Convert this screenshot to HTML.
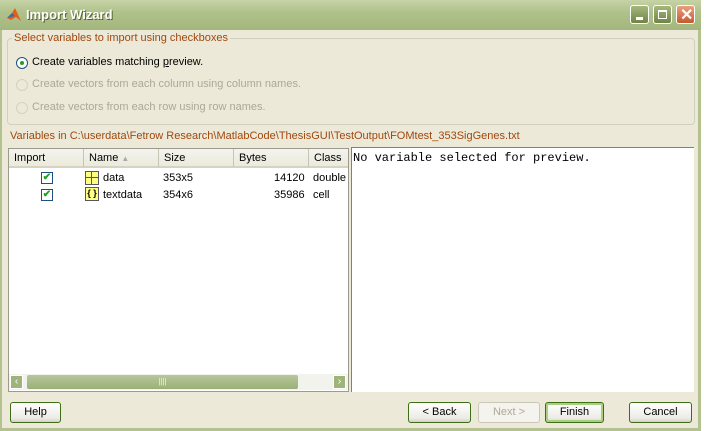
<html><head><style>
body{margin:0;width:704px;height:431px;overflow:hidden;background:#fff;font-family:"Liberation Sans",sans-serif;font-size:11px;position:relative}
.win{position:absolute;left:0;top:0;width:701px;height:431px;background:#ece9d8;border-right:3px solid #b3c28e;border-left:2px solid #b3c28e;border-bottom:3px solid #b3c28e;box-sizing:border-box}
.tb{position:absolute;left:-2px;top:0;width:701px;height:30px;background:linear-gradient(#c6d3a6,#b0c28b 40%,#a3b67d);}
.tb .t{position:absolute;left:26px;top:7px;color:#fff;font-weight:bold;font-size:13px;text-shadow:1px 1px #55622f}
.bt{position:absolute;top:5px;width:19px;height:19px;border:1px solid #fff;border-radius:3px;box-sizing:border-box;background:linear-gradient(#a6b77c,#6f8446)}
.a{position:absolute;white-space:nowrap}
.grp{position:absolute;left:5px;top:38px;width:688px;height:87px;border:1px solid #d0d0bf;border-radius:4px;box-sizing:border-box}
.rad{position:absolute;width:12px;height:12px;border-radius:50%;border:1px solid #d4d2c4;box-sizing:border-box}
.dis{color:#aca899}
.btn{position:absolute;top:402px;height:21px;border:1px solid #3e6e16;border-radius:3px;box-sizing:border-box;background:linear-gradient(#fff,#ecebe6 80%,#d6d0c5);text-align:center;line-height:19px;font-size:11px}
.hd{position:absolute;top:149px;height:19px;background:linear-gradient(#f4f3ee,#ebeadb);border-right:1px solid #c7c5b2;border-bottom:2px solid #d6d3c2;box-sizing:border-box;line-height:18px;padding-left:5px}
.cb{position:absolute;left:39px;width:12px;height:12px;border:1px solid #1c5180;box-sizing:border-box;background:#fff;color:#21a121;font-size:10px;line-height:10px;text-align:center;font-weight:bold}
</style></head><body>
<div class="win">
<div class="tb"><svg style="position:absolute;left:6px;top:7px" width="16" height="16"><path d="M1 11 L6 6 L9 1 L15 14 L10 10 L5 13Z" fill="#e0601a"/><path d="M1 11 L6 6 L9 9 Z" fill="#3a6ab0"/></svg><div class="t">Import Wizard</div>
<div class="bt" style="left:630px"><div style="position:absolute;left:5px;top:11px;width:7px;height:3px;background:#fff"></div></div>
<div class="bt" style="left:653px"><div style="position:absolute;left:4px;top:4px;width:9px;height:9px;border:1px solid #fff;border-top-width:2px;box-sizing:border-box"></div></div>
<div class="bt" style="left:676px;background:linear-gradient(#e8a080,#c55a30)"><div class="a" style="left:3px;top:-1px;color:#fff;font-size:16px;font-weight:bold">✕</div></div>
</div>
<div class="grp"></div>
<div class="a" style="left:10px;top:32px;background:#ece9d8;padding:0 2px;color:#a0480e">Select variables to import using checkboxes</div>
<div class="rad" style="left:14px;top:57px;border-color:#1c5180;background:#fff"><div style="position:absolute;left:3px;top:3px;width:4px;height:4px;border-radius:50%;background:#21a121"></div></div>
<div class="a" style="left:30px;top:56px">Create variables matching <u>p</u>review.</div>
<div class="rad" style="left:14px;top:79px"></div><div class="a dis" style="left:30px;top:78px">Create vectors from each column using column names.</div>
<div class="rad" style="left:14px;top:102px"></div><div class="a dis" style="left:30px;top:101px">Create vectors from each row using row names.</div>
<div class="a" style="left:8px;top:130px;color:#a0480e">Variables in C:\userdata\Fetrow Research\MatlabCode\ThesisGUI\TestOutput\FOMtest_353SigGenes.txt</div>
<div style="position:absolute;left:6px;top:148px;width:341px;height:244px;border:1px solid #9c9a8c;background:#fff;box-sizing:border-box"></div>
<div class="hd" style="left:7px;width:75px">Import</div>
<div class="hd" style="left:82px;width:75px">Name <span style="color:#aaa;font-size:8px">▲</span></div>
<div class="hd" style="left:157px;width:75px">Size</div>
<div class="hd" style="left:232px;width:75px">Bytes</div>
<div class="hd" style="left:307px;width:39px;border-right:none">Class</div>
<div class="cb" style="top:172px">✔</div><div class="cb" style="top:189px">✔</div>
<div style="position:absolute;left:83px;top:171px;width:14px;height:14px;background:#ffff80;border:1px solid #556;box-sizing:border-box"><div style="position:absolute;left:5px;top:0;width:1px;height:12px;background:#556"></div><div style="position:absolute;left:0;top:5px;width:12px;height:1px;background:#556"></div></div>
<div style="position:absolute;left:83px;top:187px;width:14px;height:14px;background:#ffff80;border:1px solid #556;box-sizing:border-box;font-size:9px;line-height:11px;font-weight:bold;text-align:center">{ }</div>
<div class="a" style="left:101px;top:172px">data</div><div class="a" style="left:161px;top:172px">353x5</div><div class="a" style="left:272px;top:172px">14120</div><div class="a" style="left:311px;top:172px">double</div>
<div class="a" style="left:101px;top:189px">textdata</div><div class="a" style="left:161px;top:189px">354x6</div><div class="a" style="left:272px;top:189px">35986</div><div class="a" style="left:311px;top:189px">cell</div>
<div style="position:absolute;left:7px;top:374px;width:339px;height:16px;background:#f3f3ee"></div>
<div style="position:absolute;left:8px;top:375px;width:13px;height:14px;background:#9fb47a;border:1px solid #fff;box-sizing:border-box;color:#fff;font-size:10px;line-height:12px;text-align:center">‹</div>
<div style="position:absolute;left:25px;top:375px;width:271px;height:14px;background:linear-gradient(#b7c69a,#9bb078);border-radius:2px;color:#eef;font-size:8px;text-align:center;line-height:14px">||||</div>
<div style="position:absolute;left:331px;top:375px;width:13px;height:14px;background:#9fb47a;border:1px solid #fff;box-sizing:border-box;color:#fff;font-size:10px;line-height:12px;text-align:center">›</div>
<div style="position:absolute;left:349px;top:147px;width:343px;height:245px;background:#fff;border-top:1px solid #808080;border-left:1px solid #808080;box-sizing:border-box"></div>
<div class="a" style="left:351px;top:151px;font-family:'Liberation Mono',monospace;font-size:12px">No variable selected for preview.</div>
<div class="btn" style="left:8px;width:51px">Help</div>
<div class="btn" style="left:406px;width:63px">&lt; Back</div>
<div class="btn" style="left:476px;width:62px;border-color:#c9c7ba;color:#aca899;background:#f4f3ee">Next &gt;</div>
<div class="btn" style="left:543px;width:59px;box-shadow:inset 0 0 0 2px #a8d080">Finish</div>
<div class="btn" style="left:627px;width:63px">Cancel</div>
</div>
</body></html>
